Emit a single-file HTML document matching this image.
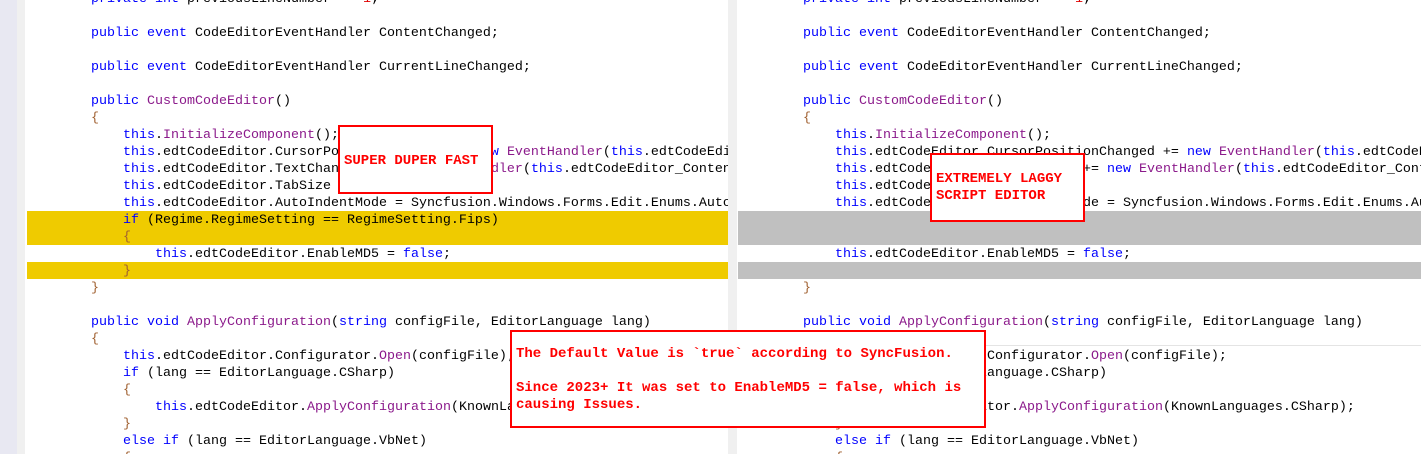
<!DOCTYPE html>
<html><head><meta charset="utf-8"><style>
html,body{margin:0;padding:0;width:1421px;height:454px;overflow:hidden;background:#fff;position:relative}
.g1{position:absolute;left:0;top:0;width:17px;height:454px;background:#e8e8f2}
.g2{position:absolute;left:17px;top:0;width:8px;height:454px;background:#f0f0f0}
.sep{position:absolute;left:728px;top:0;width:9px;height:454px;background:#f0f0f0}
.band{position:absolute}
pre{position:absolute;margin:0;top:-9px;font-family:"Liberation Mono",monospace;font-size:13.33px;line-height:17px;color:#000;white-space:pre;overflow:hidden;height:470px}
.k{color:#0000ff}.m{color:#8b1a8b}.r{color:#e00000}.b{color:#a06030}
.box{position:absolute;border:2px solid #f00;background:#fff;color:#f00;font-family:"Liberation Mono",monospace;font-weight:bold;font-size:14px;line-height:17px;box-sizing:border-box;white-space:pre}
</style></head><body>
<div class="g1"></div><div class="g2"></div><div class="sep"></div>
<div class="band" style="left:27px;top:211px;width:701px;height:34px;background:#efcb00"></div>
<div class="band" style="left:27px;top:262px;width:701px;height:17px;background:#efcb00"></div>
<div class="band" style="left:738px;top:211px;width:683px;height:34px;background:#c0c0c0"></div>
<div class="band" style="left:738px;top:262px;width:683px;height:17px;background:#c0c0c0"></div>
<div class="band" style="left:985px;top:345px;width:436px;height:1px;background:#e4e4e4"></div>
<pre style="left:91px;width:637px"><span class="k">private int</span> previousLineNumber = <span class="r">-1</span>;

<span class="k">public event</span> CodeEditorEventHandler ContentChanged;

<span class="k">public event</span> CodeEditorEventHandler CurrentLineChanged;

<span class="k">public</span> <span class="m">CustomCodeEditor</span>()
<span class="b">{</span>
    <span class="k">this</span>.<span class="m">InitializeComponent</span>();
    <span class="k">this</span>.edtCodeEditor.CursorPositionChanged += <span class="k">new</span> <span class="m">EventHandler</span>(<span class="k">this</span>.edtCodeEditor_CurrentLineChanged);
    <span class="k">this</span>.edtCodeEditor.TextChanged += <span class="k">new</span> <span class="m">EventHandler</span>(<span class="k">this</span>.edtCodeEditor_ContentChanged);
    <span class="k">this</span>.edtCodeEditor.TabSize = <span class="r">4</span>;
    <span class="k">this</span>.edtCodeEditor.AutoIndentMode = Syncfusion.Windows.Forms.Edit.Enums.AutoIndentMode.Smart;
    <span class="k">if</span> (Regime.RegimeSetting == RegimeSetting.Fips)
    <span class="b">{</span>
        <span class="k">this</span>.edtCodeEditor.EnableMD5 = <span class="k">false</span>;
    <span class="b">}</span>
<span class="b">}</span>

<span class="k">public void</span> <span class="m">ApplyConfiguration</span>(<span class="k">string</span> configFile, EditorLanguage lang)
<span class="b">{</span>
    <span class="k">this</span>.edtCodeEditor.Configurator.<span class="m">Open</span>(configFile);
    <span class="k">if</span> (lang == EditorLanguage.CSharp)
    <span class="b">{</span>
        <span class="k">this</span>.edtCodeEditor.<span class="m">ApplyConfiguration</span>(KnownLanguages.CSharp);
    <span class="b">}</span>
    <span class="k">else if</span> (lang == EditorLanguage.VbNet)
    <span class="b">{</span></pre>
<pre style="left:803px;width:618px"><span class="k">private int</span> previousLineNumber = <span class="r">-1</span>;

<span class="k">public event</span> CodeEditorEventHandler ContentChanged;

<span class="k">public event</span> CodeEditorEventHandler CurrentLineChanged;

<span class="k">public</span> <span class="m">CustomCodeEditor</span>()
<span class="b">{</span>
    <span class="k">this</span>.<span class="m">InitializeComponent</span>();
    <span class="k">this</span>.edtCodeEditor.CursorPositionChanged += <span class="k">new</span> <span class="m">EventHandler</span>(<span class="k">this</span>.edtCodeEditor_CurrentLineChanged);
    <span class="k">this</span>.edtCodeEditor.TextChanged += <span class="k">new</span> <span class="m">EventHandler</span>(<span class="k">this</span>.edtCodeEditor_ContentChanged);
    <span class="k">this</span>.edtCodeEditor.TabSize = <span class="r">4</span>;
    <span class="k">this</span>.edtCodeEditor.AutoIndentMode = Syncfusion.Windows.Forms.Edit.Enums.AutoIndentMode.Smart;


    <span class="k">this</span>.edtCodeEditor.EnableMD5 = <span class="k">false</span>;

<span class="b">}</span>

<span class="k">public void</span> <span class="m">ApplyConfiguration</span>(<span class="k">string</span> configFile, EditorLanguage lang)
<span class="b">{</span>
    <span class="k">this</span>.edtCodeEditor.Configurator.<span class="m">Open</span>(configFile);
    <span class="k">if</span> (lang == EditorLanguage.CSharp)
    <span class="b">{</span>
        <span class="k">this</span>.edtCodeEditor.<span class="m">ApplyConfiguration</span>(KnownLanguages.CSharp);
    <span class="b">}</span>
    <span class="k">else if</span> (lang == EditorLanguage.VbNet)
    <span class="b">{</span></pre>
<div class="box" style="left:338px;top:125px;width:155px;height:69px;padding:26px 0 0 4px">SUPER DUPER FAST</div>
<div class="box" style="left:930px;top:153px;width:155px;height:69px;padding:16px 0 0 4px">EXTREMELY LAGGY
SCRIPT EDITOR</div>
<div class="box" style="left:510px;top:330px;width:476px;height:98px;padding:14px 0 0 4px">The Default Value is `true` according to SyncFusion.

Since 2023+ It was set to EnableMD5 = false, which is
causing Issues.</div>
</body></html>
